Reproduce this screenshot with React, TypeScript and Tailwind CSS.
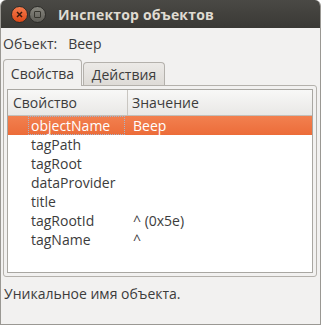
import React from 'react';

const rows = [
  { name: 'objectName', value: 'Beep', selected: true },
  { name: 'tagPath', value: '' },
  { name: 'tagRoot', value: '' },
  { name: 'dataProvider', value: '' },
  { name: 'title', value: '' },
  { name: 'tagRootId', value: '^ (0x5e)' },
  { name: 'tagName', value: '^' },
];

export default function App() {
  return (
    <div
      className="w-[321px] h-[325px] flex flex-col bg-[#f2f1f0] text-[14px] text-[#3c3c3c] overflow-hidden rounded-t-[6px] border-x border-b border-[#9a9893]"
      style={{ fontFamily: '"Open Sans", "DejaVu Sans", sans-serif' }}
    >
      {/* Title bar */}
      <div className="h-[28px] shrink-0 flex items-center bg-gradient-to-b from-[#4a4945] to-[#3a3935] pl-[10px]">
        <div className="w-[17px] h-[17px] rounded-full bg-gradient-to-b from-[#f57a4b] to-[#dd4814] flex items-center justify-center border border-[#2e2d2a]">
          <svg width="7" height="7" viewBox="0 0 7 7">
            <path d="M1 1L6 6M6 1L1 6" stroke="#3a1a0e" strokeWidth="1.5" />
          </svg>
        </div>
        <div className="ml-[1px] w-[17px] h-[17px] rounded-full bg-gradient-to-b from-[#88877f] to-[#5f5e58] flex items-center justify-center border border-[#2e2d2a]">
          <div className="w-[7px] h-[7px] border-[1.5px] border-[#37362f] rounded-[1px]" />
        </div>
        <div className="ml-[12px] font-bold text-[14px] text-[#dfdbd2] tracking-[0.2px]">Инспектор объектов</div>
      </div>

      <div className="flex-1 flex flex-col px-[2px]">
        {/* Object line */}
        <div className="h-[31px] flex items-center">
          <span>Объект:</span>
          <span className="ml-[11px]">Beep</span>
        </div>

        {/* Tabs */}
        <div className="h-[26px] flex items-end relative z-10">
          <div className="h-[27px] w-[79px] -mb-[1px] flex items-center justify-center bg-[#f2f1f0] border border-b-0 border-[#b4b1ac] rounded-t-[4px]">
            Свойства
          </div>
          <div className="h-[23px] w-[82px] ml-[1px] flex items-center justify-center bg-gradient-to-b from-[#eceae7] to-[#dedbd7] border border-b-0 border-[#b4b1ac] rounded-t-[4px]">
            Действия
          </div>
        </div>

        {/* Panel */}
        <div className="h-[192px] mr-[1px] border border-[#b4b1ac] rounded-b-[3px] rounded-tr-[3px] p-[3px]">
          <div className="h-full bg-white border border-[#a9a7a2] flex flex-col">
            <div className="h-[26px] flex bg-gradient-to-b from-[#f8f8f7] to-[#e9e8e6] border-b border-[#c2bfba]">
              <div className="w-[120px] flex items-center pl-[5px] border-r border-[#c9c6c1]">Свойство</div>
              <div className="flex-1 flex items-center pl-[4px]">Значение</div>
            </div>
            {rows.map((r) => (
              <div
                key={r.name}
                className={
                  r.selected
                    ? 'h-[19px] flex items-center bg-gradient-to-b from-[#f2804f] to-[#ec6c39] text-white'
                    : 'h-[19px] flex items-center'
                }
              >
                <div className="w-[120px] h-full pl-[23px] flex items-center">
                  {r.selected ? (
                    <div className="h-full w-full -ml-[3px] pl-[2px] flex items-center border border-dotted border-[#a8b4c8]">
                      {r.name}
                    </div>
                  ) : (
                    r.name
                  )}
                </div>
                <div className="flex-1 pl-[5px]">{r.value}</div>
              </div>
            ))}
          </div>
        </div>

        {/* Status */}
        <div className="h-[32px] flex items-center pl-[1px]">Уникальное имя объекта.</div>
      </div>
    </div>
  );
}
